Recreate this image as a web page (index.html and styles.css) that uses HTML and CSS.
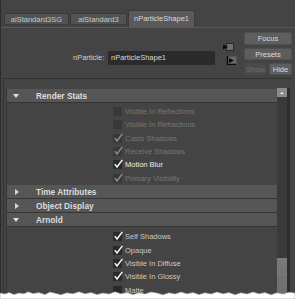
FILE: index.html
```html
<!DOCTYPE html>
<html>
<head>
<meta charset="utf-8">
<link rel="stylesheet" href="styles.css">
</head>
<body>
<div class="win">
  <div class="tabs">
    <div class="tab t1">aiStandard3SG</div>
    <div class="tab t2">aiStandard3</div>
    <div class="tab t3 active">nParticleShape1</div>
  </div>
  <div class="top">
    <div class="lbl">nParticle:</div>
    <div class="input">nParticleShape1</div>
    <div class="icons">
      <svg class="ic1" width="11" height="8" viewBox="0 0 11 8"><rect x="3.5" y="0.5" width="7" height="7" fill="#6e6e6e" stroke="#2a2a2a"/><polygon points="0,1.5 5,4 0,6.5" fill="#0a0a0a"/></svg>
      <svg class="ic2" width="11" height="9" viewBox="0 0 11 9"><rect x="1.5" y="0.5" width="9" height="8" fill="#6a6a6a" stroke="#555"/><path d="M1.5 0 V8.5 H10" fill="none" stroke="#0a0a0a" stroke-width="1.4"/><polygon points="3,2 8,4.5 3,7" fill="#0a0a0a"/></svg>
    </div>
    <div class="btns">
      <div class="btn focus">Focus</div>
      <div class="btn presets">Presets</div>
      <div class="btnrow">
        <div class="btn show">Show</div>
        <div class="btn hide">Hide</div>
      </div>
    </div>
  </div>
  <div class="panel">
    <div class="scroll">
      <div class="content">
        <div class="hdr"><span class="tri down"></span>Render Stats</div>
        <div class="body rs">
          <div class="row dis"><span class="cb off"></span>Visible In Reflections</div>
          <div class="row dis"><span class="cb off"></span>Visible In Refractions</div>
          <div class="row dis"><span class="cb"><svg viewBox="0 0 9 9"><path d="M1.6 4.6 L3.6 7.2 L8.4 0.8"/></svg></span>Casts Shadows</div>
          <div class="row dis"><span class="cb"><svg viewBox="0 0 9 9"><path d="M1.6 4.6 L3.6 7.2 L8.4 0.8"/></svg></span>Receive Shadows</div>
          <div class="row on"><span class="cb"><svg viewBox="0 0 9 9"><path d="M1.6 4.6 L3.6 7.2 L8.4 0.8"/></svg></span>Motion Blur</div>
          <div class="row dis"><span class="cb"><svg viewBox="0 0 9 9"><path d="M1.6 4.6 L3.6 7.2 L8.4 0.8"/></svg></span>Primary Visibility</div>
        </div>
        <div class="hdr"><span class="tri right"></span>Time Attributes</div>
        <div class="hdr"><span class="tri right"></span>Object Display</div>
        <div class="hdr"><span class="tri down"></span>Arnold</div>
        <div class="body ar">
          <div class="row"><span class="cb"><svg viewBox="0 0 9 9"><path d="M1.6 4.6 L3.6 7.2 L8.4 0.8"/></svg></span>Self Shadows</div>
          <div class="row"><span class="cb"><svg viewBox="0 0 9 9"><path d="M1.6 4.6 L3.6 7.2 L8.4 0.8"/></svg></span>Opaque</div>
          <div class="row"><span class="cb"><svg viewBox="0 0 9 9"><path d="M1.6 4.6 L3.6 7.2 L8.4 0.8"/></svg></span>Visible In Diffuse</div>
          <div class="row"><span class="cb"><svg viewBox="0 0 9 9"><path d="M1.6 4.6 L3.6 7.2 L8.4 0.8"/></svg></span>Visible In Glossy</div>
          <div class="row"><span class="cb off"></span>Matte</div>
        </div>
      </div>
      <div class="sb">
        <div class="up"><span></span></div>
        <div class="thumb"></div>
      </div>
    </div>
  </div>
</div>
<svg class="torn" width="295" height="9" viewBox="0 0 295 9"><polygon points="0,3 5,4 9,2.5 14,4.5 19,3 24,3.8 28,1.8 33,3.6 39,2.6 45,4.6 50,2 55,3.2 61,4.8 67,2.8 73,3.8 79,1.8 85,3.8 91,2.6 97,4.6 103,3 109,4 115,1.8 121,3.8 127,2.6 133,4.6 139,2.8 145,4 151,2 157,3 163,4.8 169,2.8 175,4 181,2 187,3.8 193,2.6 199,4.6 205,2.8 211,4 217,2 223,3.8 229,2.6 235,4.8 241,2.8 247,4 253,2 259,3.8 265,2.6 271,4.8 277,2.8 283,4 289,2.2 295,3 295,9 0,9" fill="#fff" stroke="#9a9a9a" stroke-width="0.6"/></svg>
</body>
</html>
```
FILE: styles.css
```css
* { box-sizing: border-box; margin: 0; padding: 0; }
html, body { width: 295px; height: 299px; overflow: hidden; }
body {
  background: #444;
  font-family: "Liberation Sans", Arial, sans-serif;
  font-size: 7.5px;
  color: #ccc;
  position: relative;
}
.win {
  height: 299px;
  border-left: 1px solid #2c2c2c;
  display: flex;
  flex-direction: column;
}
.tabs {
  display: flex;
  align-items: flex-end;
  gap: 1px;
  height: 28px;
  padding: 10px 0 0 3px;
  border-bottom: 1px solid #5a5a5a;
}
.tab {
  height: 12px;
  margin-bottom: 2px;
  background: #525252;
  border: 1px solid #3a3a3a;
  border-radius: 2px 2px 0 0;
  color: #c8c8c8;
  display: flex;
  align-items: center;
  justify-content: center;
}
.t1 { width: 65px; }
.t2 { width: 57px; }
.t3 { width: 67px; }
.tab.active {
  height: 17px;
  margin-bottom: 0;
  background: #5a5a5a;
  border-bottom: none;
  color: #d8d8d8;
  padding-bottom: 1px;
}
.top {
  height: 50px;
  display: flex;
  align-items: flex-start;
  padding: 4px 0 0 72px;
}
.lbl {
  width: 31px;
  margin-top: 19px;
  line-height: 14px;
  text-align: right;
  color: #d0d0d0;
}
.input {
  width: 107px;
  height: 14px;
  margin: 19px 0 0 4px;
  background: #2b2b2b;
  color: #d8d8d8;
  line-height: 14px;
  padding-left: 3px;
}
.icons {
  width: 15px;
  margin-left: 7px;
  height: 40px;
  position: relative;
}
.icons svg { display: block; }
.ic1 { margin: 11px 0 0 1px; }
.ic2 { margin: 5px 0 0 4px; }
.btns {
  width: 48px;
  margin-left: 7px;
  display: flex;
  flex-direction: column;
  gap: 3px;
}
.btn {
  background: #5e5e5e;
  border: 1px solid #505050;
  border-radius: 2px;
  color: #dcdcdc;
  display: flex;
  align-items: center;
  justify-content: center;
  height: 12px;
}
.btn.focus { height: 13px; }
.btnrow { display: flex; gap: 2px; }
.btnrow .btn { flex: 1; }
.btn.show { background: #4b4b4b; border-color: #484848; color: #6f6f6f; }
.panel {
  flex: 1;
  margin: 0 3px 0 2px;
  border-top: 1px solid #333;
  border-left: 1px solid #333;
  padding: 9px 0 0 2px;
  display: flex;
}
.scroll {
  flex: 1;
  display: flex;
  border-left: 1px solid #363636;
}
.content {
  width: 270px;
  padding-top: 1px;
}
.hdr {
  height: 14px;
  background: #565656;
  border-bottom: 1px solid #343434;
  display: flex;
  align-items: center;
  font-weight: bold;
  font-size: 8.3px;
  color: #dcdcdc;
  padding-left: 6px;
}
.tri { width: 0; height: 0; margin-right: 17px; }
.tri.down {
  border-left: 3px solid transparent;
  border-right: 3px solid transparent;
  border-top: 4px solid #e0e0e0;
}
.tri.right {
  border-top: 3px solid transparent;
  border-bottom: 3px solid transparent;
  border-left: 4px solid #d8d8d8;
  margin-left: 2px;
  margin-right: 17px;
}
.body.rs { padding-top: 2px; height: 82px; }
.body.ar { padding-top: 3.3px; }
.row {
  height: 13.3px;
  display: flex;
  align-items: center;
  padding-left: 106px;
  color: #c8c8c8;
}
.cb {
  width: 9px;
  height: 9px;
  margin-right: 3px;
  background: #2a2a2a;
  position: relative;
}
.cb svg {
  position: absolute;
  left: 0;
  top: -1px;
  width: 10px;
  height: 10px;
  overflow: visible;
}
.cb path { fill: none; stroke: #f2f2f2; stroke-width: 1.4; }
.row.dis { color: #767676; }
.row.dis .cb { background: #383838; }
.row.dis .cb path { stroke: #8a8a8a; }
.row.on { color: #ececec; }
.sb {
  width: 13px;
  background: #3a3a3a;
  border-right: 3px solid #2e2e2e;
  display: flex;
  flex-direction: column;
}
.up {
  height: 9px;
  background: #8a8a8a;
  display: flex;
  align-items: center;
  justify-content: center;
}
.up span {
  width: 0; height: 0;
  border-left: 2px solid transparent;
  border-right: 2px solid transparent;
  border-bottom: 2px solid #f0f0f0;
}
.thumb {
  margin-top: auto;
  height: 41px;
  background: linear-gradient(#7a7a7a, #6c6c6c);
  background-image:
    radial-gradient(circle, #555 0.6px, transparent 0.8px),
    linear-gradient(#7a7a7a, #6c6c6c);
  background-size: 3px 3px, 100% 100%;
  background-position: 0 18px, 0 0;
  background-repeat: repeat-x, no-repeat;
}
.torn {
  position: absolute;
  left: 0;
  bottom: 0;
  display: block;
}
```
